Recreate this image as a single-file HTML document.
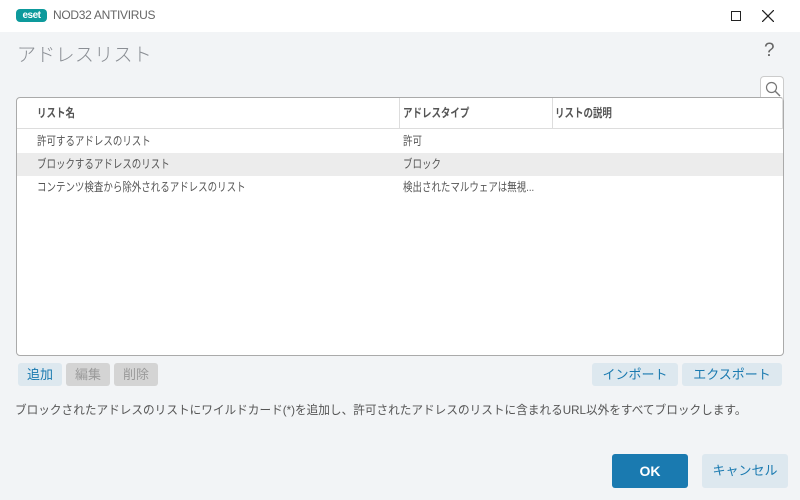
<!DOCTYPE html>
<html><head><meta charset="utf-8"><style>
*{margin:0;padding:0;box-sizing:border-box}
body{width:800px;height:500px;background:#f2f4f6;font-family:"Liberation Sans","Noto Sans CJK JP",sans-serif;position:relative;overflow:hidden;color:#444}
.tb{position:absolute;left:0;top:0;width:800px;height:32px;background:#fff}
.logo{position:absolute;left:16px;top:9px;width:31px;height:13px;background:#0d9a9c;border-radius:4px;color:#fff;font-size:10px;font-weight:bold;line-height:13px;text-align:center;letter-spacing:-0.5px}
.app{position:absolute;left:53px;top:8px;font-size:12px;color:#666;letter-spacing:-0.3px}
.abs{position:absolute}
.title{left:17px;top:40px;font-size:19px;color:#8a8e94;letter-spacing:0.3px;font-weight:300}
.help{left:764px;top:40px;font-size:19px;color:#666}
.search{left:760px;top:76px;width:24px;height:23px;background:#fff;border:1px solid #ccc;border-bottom:none;border-radius:4px 4px 0 0}
.table{left:16px;top:97px;width:768px;height:259px;background:#fff;border:1px solid #aaa;border-radius:4px}
.hdr{position:absolute;left:0;top:0;width:100%;height:31px;border-bottom:1px solid #ddd;font-size:12px;font-weight:bold;color:#555;line-height:31px}
.row{position:absolute;left:0;width:100%;height:23px;font-size:12px;line-height:23px;color:#555}
.c{transform:scaleX(0.79);transform-origin:0 50%;white-space:nowrap}
.btn{position:absolute;height:23px;border-radius:3px;font-size:13px;line-height:23px;text-align:center}
.b1{background:#dde8ef;color:#1a7ab0}
.b2{background:#d4d4d4;color:#9a9a9a}
</style></head><body>
<div class="tb">
<div class="logo">eset</div>
<div class="app">NOD32 ANTIVIRUS</div>
<div class="abs" style="left:731px;top:11px;width:10px;height:10px;border:1.3px solid #222"></div>
<svg class="abs" style="left:762px;top:10px" width="12" height="12"><path d="M0 0L12 12M12 0L0 12" stroke="#222" stroke-width="1.3"/></svg>
</div>
<div class="abs title">アドレスリスト</div>
<div class="abs help">?</div>
<div class="abs search"><svg style="position:absolute;left:4px;top:4px" width="16" height="16"><circle cx="6.5" cy="6.5" r="5" fill="none" stroke="#777" stroke-width="1.2"/><path d="M10 10L15 15" stroke="#777" stroke-width="1.4"/></svg></div>
<div class="abs table">
<div class="hdr"><span class="abs c" style="left:20px">リスト名</span>
<span class="abs" style="left:382px;top:0;height:31px;border-left:1px solid #ddd"></span><span class="abs c" style="left:386px">アドレスタイプ</span>
<span class="abs" style="left:535px;top:0;height:31px;border-left:1px solid #ddd"></span><span class="abs c" style="left:538px">リストの説明</span>
<span class="abs" style="left:765px;top:0;height:31px;border-left:1px solid #ddd"></span></div>
<div class="row" style="top:32px"><span class="abs c" style="left:20px">許可するアドレスのリスト</span><span class="abs c" style="left:386px">許可</span></div>
<div class="row" style="top:55px;background:#ececec"><span class="abs c" style="left:20px">ブロックするアドレスのリスト</span><span class="abs c" style="left:386px">ブロック</span></div>
<div class="row" style="top:78px"><span class="abs c" style="left:20px">コンテンツ検査から除外されるアドレスのリスト</span><span class="abs c" style="left:386px">検出されたマルウェアは無視...</span></div>
</div>
<div class="btn b1" style="left:18px;top:363px;width:44px">追加</div>
<div class="btn b2" style="left:66px;top:363px;width:44px">編集</div>
<div class="btn b2" style="left:114px;top:363px;width:44px">削除</div>
<div class="btn b1" style="left:592px;top:363px;width:86px">インポート</div>
<div class="btn b1" style="left:682px;top:363px;width:100px">エクスポート</div>
<div class="abs c" style="left:15px;top:401px;font-size:12px;color:#555;transform:scaleX(0.97)">ブロックされたアドレスのリストにワイルドカード(*)を追加し、許可されたアドレスのリストに含まれるURL以外をすべてブロックします。</div>
<div class="btn" style="left:612px;top:454px;width:76px;height:34px;line-height:34px;background:#1a7ab0;color:#fff;font-weight:bold;font-size:14px">OK</div>
<div class="btn b1" style="left:702px;top:454px;width:86px;height:34px;line-height:34px">キャンセル</div>
</body></html>
